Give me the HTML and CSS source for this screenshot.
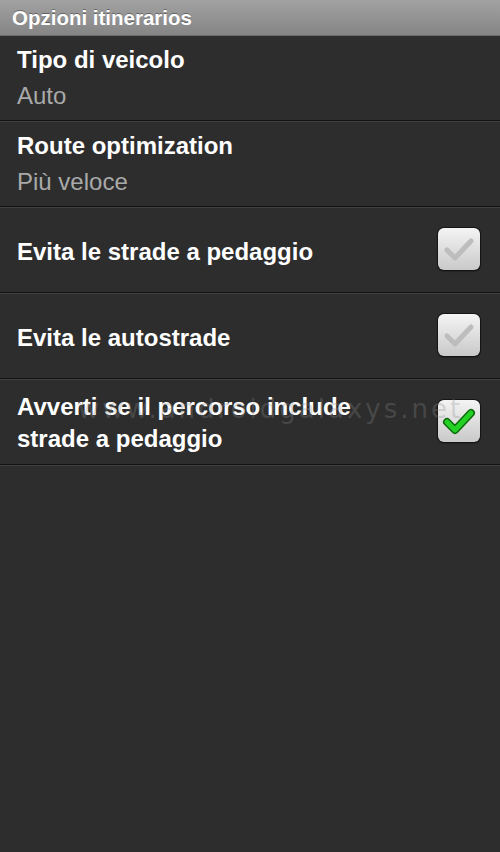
FILE: index.html
```html
<!DOCTYPE html>
<html>
<head>
<meta charset="utf-8">
<link rel="stylesheet" href="styles.css">
</head>
<body>
<div class="screen">
  <div class="header">Opzioni itinerarios</div>
  <div class="row">
    <div class="texts">
      <div class="title">Tipo di veicolo</div>
      <div class="sub">Auto</div>
    </div>
  </div>
  <div class="row">
    <div class="texts">
      <div class="title">Route optimization</div>
      <div class="sub">Più veloce</div>
    </div>
  </div>
  <div class="row">
    <div class="texts"><div class="title single">Evita le strade a pedaggio</div></div>
    <div class="check">
      <svg viewBox="0 0 42 42" width="42" height="42"><path class="mark-off" d="M9 22 L17 30 L33 13"/></svg>
    </div>
  </div>
  <div class="row">
    <div class="texts"><div class="title single">Evita le autostrade</div></div>
    <div class="check">
      <svg viewBox="0 0 42 42" width="42" height="42"><path class="mark-off" d="M9 22 L17 30 L33 13"/></svg>
    </div>
  </div>
  <div class="row">
    <div class="texts"><div class="title multi">Avverti se il percorso include strade a pedaggio</div></div>
    <div class="check">
      <svg viewBox="0 0 42 42" width="42" height="42"><path class="mark-on-edge" d="M9 22 L17 30 L33 13"/><path class="mark-on" d="M9 22 L17 30 L33 13"/></svg>
    </div>
    <div class="watermark">www.androidgalaxys.net</div>
  </div>
</div>
</body>
</html>
```
FILE: styles.css
```css
html, body {
  margin: 0;
  padding: 0;
  background: #2d2d2d;
}
.screen {
  width: 500px;
  height: 852px;
  background: #2d2d2d;
  font-family: "Liberation Sans", Arial, sans-serif;
  overflow: hidden;
}
.header {
  height: 35px;
  border-bottom: 1px solid #6e6e6e;
  background: linear-gradient(#a2a2a2, #858585);
  color: #fff;
  font-weight: bold;
  font-size: 20.5px;
  line-height: 35px;
  padding-left: 12px;
  text-shadow: 0 -1px 0 rgba(0,0,0,0.35);
}
.row {
  position: relative;
  height: 84px;
  display: flex;
  align-items: center;
  padding: 0 20px 0 17px;
  border-bottom: 1px solid #121212;
  box-shadow: 0 1px 0 #404040;
  margin-bottom: 1px;
}
.texts {
  flex: 1;
}
.title {
  color: #fff;
  font-weight: bold;
  font-size: 24px;
  line-height: 30px;
}
.title.single {
  padding-top: 4px;
}
.title.multi {
  width: 375px;
  line-height: 32px;
  padding-top: 2px;
}
.sub {
  color: #a9a9a9;
  font-size: 24px;
  line-height: 30px;
  margin-top: 6px;
}
.check {
  width: 42px;
  height: 42px;
  border-radius: 6px;
  background: linear-gradient(#f4f4f4, #c9c9c9);
  box-shadow: 0 0 0 1px #151515, 0 1px 2px rgba(0,0,0,0.8);
  margin-top: -2px;
}
.check svg {
  display: block;
}
.mark-off {
  fill: none;
  stroke: #bdbdbd;
  stroke-width: 5;
  stroke-linecap: round;
  stroke-linejoin: round;
}
.mark-on-edge {
  fill: none;
  stroke: #0c6a0c;
  stroke-width: 8;
  stroke-linecap: round;
  stroke-linejoin: round;
}
.mark-on {
  fill: none;
  stroke: #25d025;
  stroke-width: 5;
  stroke-linecap: round;
  stroke-linejoin: round;
}
.watermark {
  position: absolute;
  left: 78px;
  top: 14px;
  font-family: "DejaVu Sans", sans-serif;
  font-size: 26px;
  letter-spacing: 3px;
  color: rgba(140,140,140,0.3);
  pointer-events: none;
}
```
